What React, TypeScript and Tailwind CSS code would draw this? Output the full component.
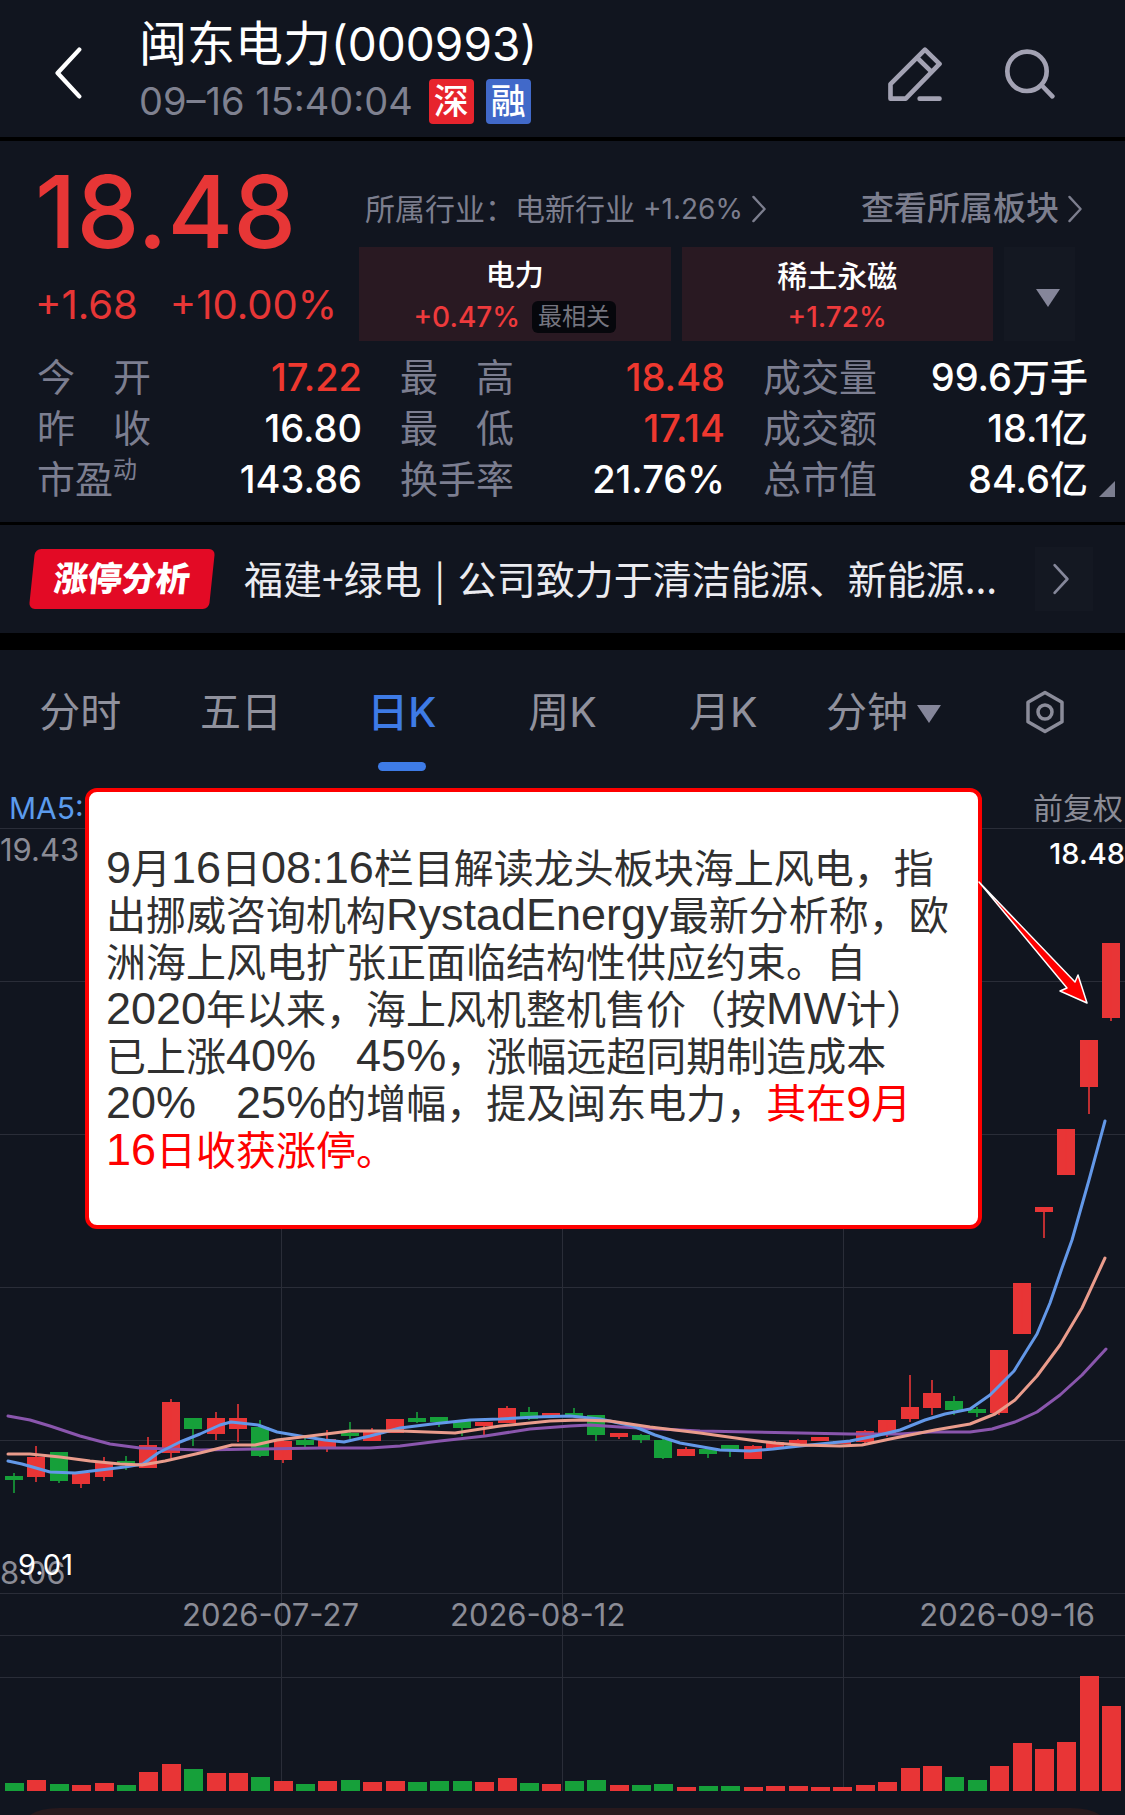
import { clsx } from "clsx";

// [up, bodyTop, bodyBottom, high, low, volume], in chart units
type Candle = [number, number, number, number, number, number];

const CANDLES: Candle[] = [
  [0, 648, 652, 645, 665, 8],
  [1, 629, 649, 618, 654, 11],
  [0, 624, 653, 624, 655, 7],
  [1, 645, 656, 644, 660, 6],
  [1, 634, 649, 629, 653, 8],
  [0, 633, 637, 628, 642, 6],
  [1, 617, 640, 609, 640, 19],
  [1, 574, 625, 571, 630, 27],
  [0, 590, 601, 590, 618, 22],
  [1, 590, 606, 584, 612, 18],
  [1, 590, 601, 576, 614, 18],
  [0, 599, 628, 592, 629, 14],
  [1, 613, 632, 611, 635, 10],
  [0, 612, 617, 609, 619, 7],
  [1, 611, 619, 602, 624, 10],
  [0, 605, 608, 594, 611, 11],
  [1, 603, 613, 600, 613, 9],
  [1, 591, 605, 591, 605, 10],
  [0, 590, 594, 584, 595, 9],
  [0, 589, 594, 589, 599, 10],
  [0, 593, 600, 593, 608, 10],
  [1, 594, 598, 594, 607, 9],
  [1, 580, 595, 578, 595, 13],
  [0, 584, 591, 579, 592, 8],
  [1, 585, 589, 585, 589, 7],
  [0, 585, 589, 580, 589, 10],
  [0, 587, 607, 587, 613, 11],
  [1, 605, 609, 605, 611, 6],
  [0, 607, 612, 606, 615, 6],
  [0, 612, 630, 611, 631, 7],
  [1, 621, 628, 619, 628, 4],
  [0, 621, 626, 619, 630, 5],
  [0, 617, 623, 617, 629, 5],
  [1, 618, 631, 617, 631, 4],
  [1, 614, 620, 613, 620, 5],
  [1, 612, 616, 611, 616, 5],
  [1, 609, 613, 609, 613, 4],
  [1, 613, 616, 613, 616, 4],
  [1, 603, 614, 602, 616, 6],
  [1, 592, 605, 592, 609, 9],
  [1, 579, 591, 547, 594, 23],
  [1, 565, 580, 552, 587, 25],
  [0, 573, 582, 568, 587, 14],
  [0, 581, 585, 579, 589, 11],
  [1, 522, 585, 522, 587, 25],
  [1, 455, 506, 455, 506, 48],
  [1, 379, 384, 379, 410, 42],
  [1, 301, 347, 301, 347, 49],
  [1, 212, 259, 212, 286, 115],
  [1, 115, 190, 115, 193, 85],
];

const RED = "#e83536";
const GREEN = "#16a03a";

const AVERAGES = [
  {
    color: "#8a56ad",
    points:
      "8,588 30,592 50,598 80,608 110,616 140,620 200,622 260,621 320,620 370,620 400,618 440,613 485,608 530,601 570,598 590,597 620,599 660,601 700,603 750,604 800,605 850,606 900,606 930,604 970,604 992,601 1015,594 1037,584 1060,567 1082,547 1106,521",
  },
  {
    color: "#6398e8",
    points:
      "8,633 22,636 36,640 50,644 75,645 100,642 125,639 143,636 158,625 180,614 200,606 220,597 231,594 258,597 277,604 300,608 325,612 344,614 370,608 400,600 432,596 470,592 500,591 535,589 570,588 600,591 633,598 655,607 680,615 720,622 750,623 773,621 800,618 850,613 875,608 900,602 925,592 945,586 970,581 990,567 1003,554 1014,543 1027,522 1037,506 1050,475 1062,440 1072,412 1089,352 1105,293",
  },
  {
    color: "#ea9c8c",
    points:
      "8,626 30,626 60,629 90,633 120,636 142,637 165,633 200,625 232,617 255,617 277,612 310,608 350,603 370,603 400,603 455,605 500,598 550,593 580,592 610,593 650,599 700,605 750,612 775,615 800,617 840,618 862,617 890,611 915,606 935,602 970,596 995,586 1015,572 1037,548 1060,517 1082,480 1105,430",
  },
];

const STATS = [
  { label: "今　开", value: "17.22", red: true },
  { label: "最　高", value: "18.48", red: true },
  { label: "成交量", value: "99.6万手" },
  { label: "昨　收", value: "16.80" },
  { label: "最　低", value: "17.14", red: true },
  { label: "成交额", value: "18.1亿" },
  { label: "市盈", sup: "动", value: "143.86" },
  { label: "换手率", value: "21.76%" },
  { label: "总市值", value: "84.6亿" },
];

const TABS = ["分时", "五日", "日K", "周K", "月K"];

function Chevron({ className, left = false }: { className: string; left?: boolean }) {
  return (
    <svg viewBox="0 0 16 30" fill="none" stroke="currentColor" strokeWidth="2.5" className={className}>
      <path d={left ? "M14.5 1.5 2 15l12.500 13.500" : "M2 2l12 13L2 28"} strokeLinecap="round" strokeLinejoin="round" />
    </svg>
  );
}

function Header() {
  return (
    <header className="flex items-center border-b-4 border-black pt-[14px] pb-[9px] pr-[70px] pl-[54px]">
      <button type="button" aria-label="返回" className="mt-1 mr-[57px] text-white">
        <Chevron left className="h-[52px] w-7" />
      </button>
      <div className="flex-1">
        <h1 className="text-[48px] leading-[60px] text-white">
          闽东电力<span className="text-[46px]">(000993)</span>
        </h1>
        <div className="flex items-center gap-3 text-[38px] leading-[54px] text-[#7f8190]">
          <time className="mr-1">09–16 15:40:04</time>
          <span className="rounded-sm bg-[#e7242d] px-[5px] text-[35px] leading-[45px] font-medium text-white">深</span>
          <span className="rounded-sm bg-[#4169c9] px-[5px] text-[35px] leading-[45px] font-medium text-white">融</span>
        </div>
      </div>
      <button type="button" aria-label="编辑" className="mt-1.5 text-[#a3a2b3]">
        <svg viewBox="54 50 162 163" className="size-[54px]" fill="none" stroke="currentColor" strokeWidth="14" strokeLinejoin="round" strokeLinecap="round">
          <path d="M165 58l44 43L107 206H61v-44zM143 84l39 38M149 206h60" />
        </svg>
      </button>
      <button type="button" aria-label="搜索" className="mt-1.5 ml-[63px] text-[#a3a2b3]">
        <svg viewBox="404 59 150 150" className="size-[50px]" fill="none" stroke="currentColor" strokeWidth="14" strokeLinecap="round">
          <circle cx="470" cy="126" r="59" />
          <path d="M516 170l30 31" />
        </svg>
      </button>
    </header>
  );
}

function Quote() {
  return (
    <section className="border-b-[3px] border-black pb-[17px]">
      <div className="flex pr-[50px] pl-[35px]">
        <div className="w-[324px] shrink-0 text-[#e73636]">
          <p className="mt-[21px] text-[100px] leading-[100px] font-medium">18.48</p>
          <p className="mt-[11px] flex gap-8 text-[40px] leading-[64px]">
            <span>+1.68</span>
            <span>+10.00%</span>
          </p>
        </div>
        <div className="min-w-0 flex-1 pt-12">
          <div className="flex h-10 items-center justify-between pl-[6px] text-[#7c7e8e]">
            <a href="#industry" className="flex items-center text-[30px] whitespace-nowrap">
              所属行业：电新行业<span className="ml-2 text-[28px]">+1.26%</span>
              <Chevron className="ml-2 h-[28px] w-4" />
            </a>
            <a href="#sectors" className="-mr-2 flex items-center text-[33px] font-medium whitespace-nowrap">
              查看所属板块
              <Chevron className="ml-2 h-[28px] w-4" />
            </a>
          </div>
          <div className="mt-[18px] flex h-[94px] gap-[11px]">
            <button type="button" className="flex-1 bg-[#291922] pt-1">
              <span className="block text-[29px] leading-[42px] font-medium text-white">电力</span>
              <span className="flex items-center justify-center gap-3 text-[28px] leading-10 font-medium text-[#ee3a3c]">
                +0.47%
                <span className="rounded-md bg-[#06070c] px-[6px] text-[24px] leading-8 font-normal text-[#75757f]">最相关</span>
              </span>
            </button>
            <button type="button" className="flex-1 bg-[#291922] pt-1">
              <span className="block text-[30px] leading-[42px] font-medium text-white">稀土永磁</span>
              <span className="block text-[28px] leading-10 font-medium text-[#ee3a3c]">+1.72%</span>
            </button>
            <button type="button" aria-label="展开" className="flex w-[71px] items-center justify-center bg-[#141822] pl-4">
              <svg viewBox="0 0 26 20" className="mt-2 w-[26px]" fill="#85869a">
                <path d="M1 1h24L13 19z" />
              </svg>
            </button>
          </div>
        </div>
      </div>
      <div className="relative mt-[11px]">
        <dl className="grid grid-cols-3 gap-x-[38px] px-[37px]">
          {STATS.map((s) => (
            <div key={s.label} className="flex justify-between text-[38px] leading-[51px] whitespace-nowrap">
              <dt className="flex text-[#7c7e90]">
                {s.label}
                {s.sup && <span className="text-[24px] leading-8">{s.sup}</span>}
              </dt>
              <dd className={clsx("font-medium", s.red ? "text-[#ee382f]" : "text-white")}>{s.value}</dd>
            </div>
          ))}
        </dl>
        <svg viewBox="0 0 16 16" className="absolute right-[10px] bottom-2 size-4" fill="#7c7e90">
          <path d="M16 0v16H0z" />
        </svg>
      </div>
    </section>
  );
}

function Analysis() {
  return (
    <a href="#analysis" className="flex items-center border-b-[17px] border-black px-8 py-[22px]">
      <span className="-skew-x-6 rounded-md bg-[#e30a25] px-[22px] text-[34px] leading-[60px] font-black text-white">
        涨停分析
      </span>
      <span className="ml-8 flex-1 truncate pb-1 font-['Noto_Sans_CJK_SC',sans-serif] text-[39px] leading-[60px] text-[#ebebf0]">
        福建+绿电 <span className="mx-1">|</span> 公司致力于清洁能源、新能源...
      </span>
      <span className="flex h-16 w-[58px] items-center justify-center bg-[#141822] pr-1.5 text-[#85879a]">
        <Chevron className="h-8 w-5" />
      </span>
    </a>
  );
}

function Tabs() {
  return (
    <nav className="grid h-[124px] grid-cols-7 text-[41px] text-[#90919d]">
      {TABS.map((t) => {
        const active = t === "日K";
        return (
          <button
            key={t}
            type="button"
            className={clsx("flex flex-col items-center justify-between pt-8 pb-[3px] leading-[60px]", active && "font-medium text-[#3e7be6]")}
          >
            {t}
            {active && <i className="h-[9px] w-12 rounded-full bg-[#3e7be6]" />}
          </button>
        );
      })}
      <button type="button" className="flex items-start justify-center gap-2 pt-8 leading-[60px]">
        分钟
        <svg viewBox="0 0 26 20" className="mt-[22px] w-[26px]" fill="#85869a">
          <path d="M1 1h24L13 19z" />
        </svg>
      </button>
      <button type="button" aria-label="设置" className="flex items-start justify-center pt-10">
        <svg viewBox="0 0 40 44" className="h-11 w-10" fill="none" stroke="#8b8c9a" strokeWidth="3.500" strokeLinejoin="round">
          <path d="M20 2.500 37 12.200v19.600L20 41.500 3 31.800V12.200z" />
          <circle cx="20" cy="22" r="7" />
        </svg>
      </button>
    </nav>
  );
}

function Chart() {
  return (
    <svg viewBox="0 0 1125 987" className="block w-full text-[31px]">
      <g stroke="#2a2d38" strokeWidth="1">
        {[0.5, 153.5, 306.5, 459.5, 612.5, 765.5, 807.5, 849.5].map((y) => (
          <path key={y} d={`M0 ${y}H1125`} />
        ))}
        {[281.5, 562.5, 843.5].map((x) => (
          <path key={x} d={`M${x} 0V963`} />
        ))}
      </g>
      {CANDLES.map(([up, top, bottom, high, low, volume], i) => {
        const x = Math.round(14 + i * 22.39);
        return (
          <g key={i} fill={up ? RED : GREEN}>
            <rect x={x - 9} y={top} width="18" height={bottom - top} />
            <rect x={x - 1} y={high} width="2" height={low - high} opacity="0.8" />
            <rect x={x - 9} y={963 - volume} width="19" height={volume} />
          </g>
        );
      })}
      {AVERAGES.map((a) => (
        <polyline key={a.color} points={a.points} fill="none" stroke={a.color} strokeWidth="3" strokeLinejoin="round" strokeLinecap="round" />
      ))}
      <g fill="#8b8c96">
        <text x="0" y="33">19.43</text>
        <text x="0" y="756">8.06</text>
        <text x="182" y="798">2026-07-27</text>
        <text x="450" y="798">2026-08-12</text>
        <text x="1095" y="798" textAnchor="end">2026-09-16</text>
      </g>
      <g fill="#fff" className="text-[29px]">
        <text x="1125" y="36" textAnchor="end" fontWeight="500">18.48</text>
        <text x="18" y="747">9.01</text>
      </g>
      <path d="M30 987q10-7 30-7h1010q20 0 30 7z" fill="#28191d" />
    </svg>
  );
}

function Latin({ children }: { children: string }) {
  return <span className="text-[45px] leading-[39px]">{children}</span>;
}

function Note() {
  return (
    <div className="absolute top-[14px] right-[143px] left-[85px] rounded-xl border-4 border-[#fe0000] bg-white px-[17px] pt-[54px] pb-[50px] font-['Liberation_Sans','Noto_Sans_CJK_SC',sans-serif] text-[40px] leading-[47px] whitespace-nowrap text-[#303030]">
      <p>
        <Latin>9</Latin>月<Latin>16</Latin>日<Latin>08:16</Latin>栏目解读龙头板块海上风电，指
        <br />
        出挪威咨询机构<Latin>RystadEnergy</Latin>最新分析称，欧
        <br />
        洲海上风电扩张正面临结构性供应约束。自
        <br />
        <Latin>2020</Latin>年以来，海上风机整机售价（按<Latin>MW</Latin>计）
        <br />
        已上涨<Latin>40%</Latin>　<Latin>45%</Latin>，涨幅远超同期制造成本
        <br />
        <Latin>20%</Latin>　<Latin>25%</Latin>的增幅，提及闽东电力，
        <span className="text-[#fe0000]">
          其在<Latin>9</Latin>月
          <br />
          <Latin>16</Latin>日收获涨停。
        </span>
      </p>
      <svg viewBox="0 0 114 126" className="absolute top-[87px] left-full h-[126px] w-[114px]" fill="#fe0000" stroke="#fff" strokeWidth="1.500" strokeLinejoin="round">
        <path d="M1 3 97 103l3-7 9 28-27-12 7-3z" />
      </svg>
    </div>
  );
}

export default function App() {
  return (
    <main className="min-h-screen overflow-hidden bg-[#11151f] font-[Inter,'Noto_Sans_CJK_SC',sans-serif]">
      <Header />
      <Quote />
      <Analysis />
      <Tabs />
      <div className="relative">
        <div className="flex h-[54px] justify-between pt-[14px] pr-[2px] pl-[9px] text-[30px] leading-10">
          <span className="text-[#5b9bec]">MA5:</span>
          <span className="text-[#8b8c96]">前复权</span>
        </div>
        <Chart />
        <Note />
      </div>
    </main>
  );
}
